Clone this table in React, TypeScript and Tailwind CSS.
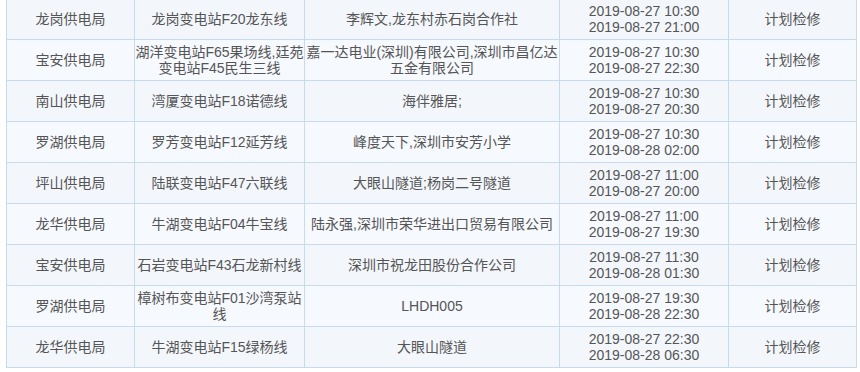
import React from "react";

const rows: [string, string[], string[], string[]][] = [
  ["龙岗供电局", ["龙岗变电站F20龙东线"], ["李辉文,龙东村赤石岗合作社"], ["2019-08-27 10:30", "2019-08-27 21:00"]],
  ["宝安供电局", ["湖洋变电站F65果场线,廷苑", "变电站F45民生三线"], ["嘉一达电业(深圳)有限公司,深圳市昌亿达", "五金有限公司"], ["2019-08-27 10:30", "2019-08-27 22:30"]],
  ["南山供电局", ["湾厦变电站F18诺德线"], ["海伴雅居;"], ["2019-08-27 10:30", "2019-08-27 20:30"]],
  ["罗湖供电局", ["罗芳变电站F12延芳线"], ["峰度天下,深圳市安芳小学"], ["2019-08-27 10:30", "2019-08-28 02:00"]],
  ["坪山供电局", ["陆联变电站F47六联线"], ["大眼山隧道;杨岗二号隧道"], ["2019-08-27 11:00", "2019-08-27 20:00"]],
  ["龙华供电局", ["牛湖变电站F04牛宝线"], ["陆永强,深圳市荣华进出口贸易有限公司"], ["2019-08-27 11:00", "2019-08-27 19:30"]],
  ["宝安供电局", ["石岩变电站F43石龙新村线"], ["深圳市祝龙田股份合作公司"], ["2019-08-27 11:30", "2019-08-28 01:30"]],
  ["罗湖供电局", ["樟树布变电站F01沙湾泵站", "线"], ["LHDH005"], ["2019-08-27 19:30", "2019-08-28 22:30"]],
  ["龙华供电局", ["牛湖变电站F15绿杨线"], ["大眼山隧道"], ["2019-08-27 22:30", "2019-08-28 06:30"]],
];

const Lines = ({ lines }: { lines: string[] }) => (
  <>
    {lines.map((l, i) => (
      <div key={i} className="whitespace-nowrap">{l}</div>
    ))}
  </>
);

export default function App() {
  return (
    <div
      className="w-[860px] h-[372px] overflow-hidden bg-white pl-[6px]"
      style={{ fontFamily: '"Liberation Sans", "Noto Sans CJK SC", sans-serif' }}
    >
      <table className="-mt-[2px] border-collapse table-fixed w-[850px] text-[14px] leading-[16px] text-[#555]">
        <colgroup>
          <col className="w-[128px]" />
          <col className="w-[170px]" />
          <col className="w-[255px]" />
          <col className="w-[169px]" />
          <col className="w-[128px]" />
        </colgroup>
        <tbody>
          {rows.map((r, i) => (
            <tr key={i} className={i % 2 === 0 ? "bg-[#f3f7fc] h-[41px]" : "bg-[#f6f9fe] h-[41px]"}>
              <td className="border border-[#c6dbef] text-center p-0">{r[0]}</td>
              <td className="border border-[#c6dbef] text-center p-0"><Lines lines={r[1]} /></td>
              <td className="border border-[#c6dbef] text-center p-0"><Lines lines={r[2]} /></td>
              <td className="border border-[#c6dbef] text-center p-0"><Lines lines={r[3]} /></td>
              <td className="border border-[#c6dbef] text-center p-0">计划检修</td>
            </tr>
          ))}
        </tbody>
      </table>
    </div>
  );
}
